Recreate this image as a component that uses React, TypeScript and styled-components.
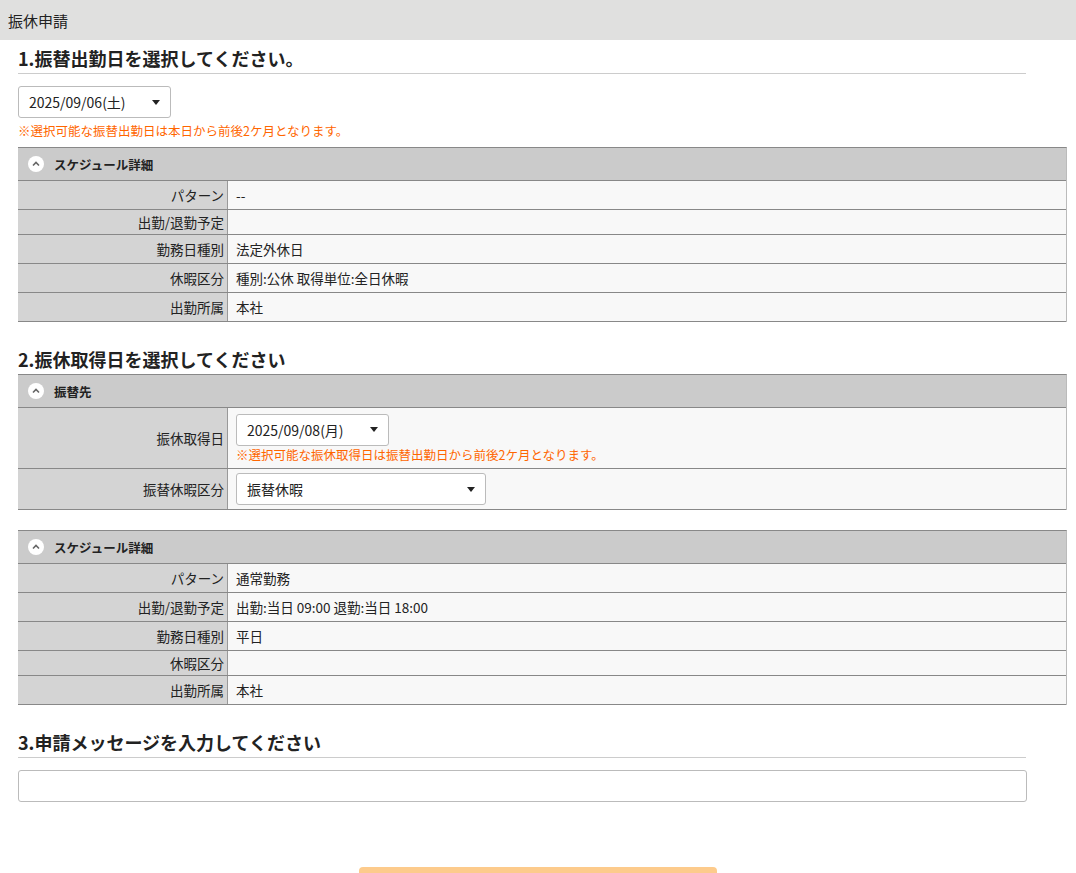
import React from "react";
import styled, { createGlobalStyle } from "styled-components";

const G = createGlobalStyle`
  body { margin: 0; font-family: "Noto Sans CJK JP", "Noto Sans", sans-serif; color: #222; background: #fff; }
`;
const TopBar = styled.div`
  height: 40px; background: #e0e0df; display: flex; align-items: center; padding-left: 8px; font-size: 15px; color: #222;
`;
const Main = styled.div` padding: 0 10px 0 18px; `;
const Heading = styled.h2<{ $mt: number }>`
  margin: ${p => p.$mt}px 0 0; width: 1008px; font-size: 18px; font-weight: bold; line-height: 26px;
  border-bottom: 1px solid #ccc; padding-bottom: 2px;
`;
const Select = styled.div<{ $w: number }>`
  width: ${p => p.$w}px; height: 32px; box-sizing: border-box; border: 1px solid #bbb; border-radius: 3px; background: #fff;
  display: flex; align-items: center; justify-content: space-between; padding: 0 10px; font-size: 14px;
  &::after { content: ""; border: 4px solid transparent; border-top: 5px solid #222; margin-top: 4px; }
`;
const Note = styled.div` color: #f60; font-size: 12.5px; line-height: 16px; margin-top: 5px; `;
const Table = styled.div<{ $mt: number }>`
  margin-top: ${p => p.$mt}px; width: 1048px; border-top: 1px solid #888; border-right: 1px solid #bbb;
`;
const THead = styled.div`
  height: 32px; background: #cbcbcb; border-bottom: 1px solid #888; display: flex; align-items: center; gap: 10px;
  padding-left: 10px; font-size: 12.5px; font-weight: bold;
`;
const Chevron = styled.span`
  width: 16px; height: 16px; border-radius: 50%; background: #fff; display: inline-flex; align-items: center; justify-content: center;
`;
const Row = styled.div<{ $h: number }>`
  display: flex; min-height: ${p => p.$h}px; border-bottom: 1px solid #888; font-size: 13.5px;
`;
const Label = styled.div`
  width: 210px; background: #d4d4d4; border-right: 1px solid #999; display: flex; align-items: center; justify-content: flex-end; padding-right: 3px; box-sizing: border-box;
`;
const Value = styled.div`
  flex: 1; background: #f8f8f8; display: flex; flex-direction: column; justify-content: center; padding: 4px 8px;
`;
const TextBox = styled.div` margin-top: 12px; width: 1009px; height: 32px; box-sizing: border-box; border: 1px solid #bbb; border-radius: 3px; `;
const BtnWrap = styled.div` display: flex; padding-left: 341px; margin-top: 65px; `;
const Btn = styled.div` width: 358px; height: 20px; background: #fdcb8c; border-radius: 4px 4px 0 0; `;

const Ch = () => (
  <Chevron>
    <svg width="10" height="10" viewBox="0 0 10 10"><path d="M2 6.5 L5 3.5 L8 6.5" fill="none" stroke="#666" strokeWidth="1.6" /></svg>
  </Chevron>
);

type R = [string, React.ReactNode, number];
const Tbl = ({ title, rows, mt }: { title: string; rows: R[]; mt: number }) => (
  <Table $mt={mt}>
    <THead><Ch />{title}</THead>
    {rows.map(([l, v, h], i) => (
      <Row key={i} $h={h}><Label>{l}</Label><Value>{v}</Value></Row>
    ))}
  </Table>
);

export default function App() {
  return (
    <>
      <G />
      <TopBar>振休申請</TopBar>
      <Main>
        <Heading $mt={5}>1.振替出勤日を選択してください。</Heading>
        <div style={{ marginTop: 12 }}><Select $w={153}>2025/09/06(土)</Select></div>
        <Note>※選択可能な振替出勤日は本日から前後2ケ月となります。</Note>
        <Tbl mt={8} title="スケジュール詳細" rows={[
          ["パターン", "--", 27], ["出勤/退勤予定", "", 24], ["勤務日種別", "法定外休日", 28],
          ["休暇区分", "種別:公休 取得単位:全日休暇", 28], ["出勤所属", "本社", 28],
        ]} />
        <Heading $mt={24}>2.振休取得日を選択してください</Heading>
        <Tbl mt={-1} title="振替先" rows={[
          ["振休取得日", <><Select $w={153}>2025/09/08(月)</Select><Note style={{ marginTop: 1 }}>※選択可能な振休取得日は振替出勤日から前後2ケ月となります。</Note></>, 60],
          ["振替休暇区分", <Select $w={250}>振替休暇</Select>, 40],
        ]} />
        <Tbl mt={20} title="スケジュール詳細" rows={[
          ["パターン", "通常勤務", 28], ["出勤/退勤予定", "出勤:当日 09:00 退勤:当日 18:00", 28], ["勤務日種別", "平日", 27],
          ["休暇区分", "", 24], ["出勤所属", "本社", 27],
        ]} />
        <Heading $mt={24}>3.申請メッセージを入力してください</Heading>
        <TextBox />
        <BtnWrap><Btn /></BtnWrap>
      </Main>
    </>
  );
}
